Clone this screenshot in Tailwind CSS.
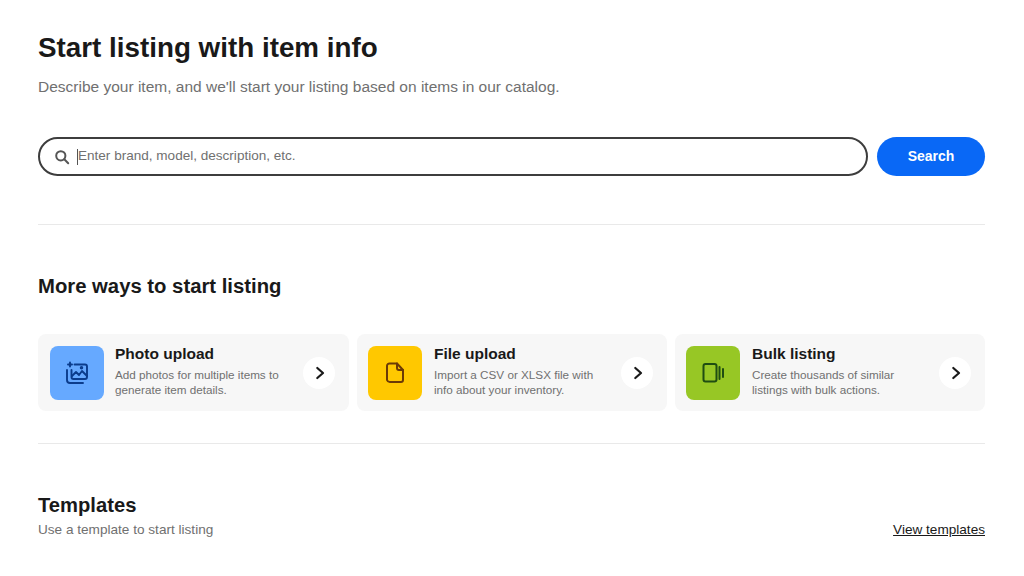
<!DOCTYPE html>
<html lang="en">
<head>
<meta charset="utf-8">
<title>Start listing</title>
<script src="https://cdn.jsdelivr.net/npm/@tailwindcss/browser@4"></script>
</head>
<body class="bg-white font-['Liberation_Sans',Arial,sans-serif] text-[#191919] overflow-hidden">
<main class="w-[1024px] h-[576px] pl-[38px] pr-[39px] pt-[31px] overflow-hidden">
  <h1 class="text-[27.8px] leading-[34px] font-bold">Start listing with item info</h1>
  <p class="mt-[12px] text-[15.5px] leading-[20px] text-[#707070]">Describe your item, and we'll start your listing based on items in our catalog.</p>
  <div class="mt-[40px] flex gap-[9px]">
    <div class="flex-1 h-[39px] rounded-full border-2 border-[#3d3d3d] flex items-center pl-[14px]">
      <svg class="w-[16px] h-[16px] text-[#555]" viewBox="0 0 16 16" fill="none" stroke="currentColor" stroke-width="2" stroke-linecap="round"><circle cx="6.8" cy="6.8" r="4.6"/><path d="M10.3 10.3 14.2 14.2"/></svg>
      <span class="ml-[7px] w-px h-[16px] bg-[#555]"></span>
      <span class="text-[13.55px] text-[#707070]">Enter brand, model, description, etc.</span>
    </div>
    <button class="w-[108px] h-[39px] rounded-full bg-[#0968f6] text-white text-[14px] font-bold">Search</button>
  </div>
  <hr class="mt-[48px] border-[#e9e9e9]">
  <h2 class="mt-[49px] text-[20.3px] leading-[24px] font-bold">More ways to start listing</h2>
  <div class="mt-[36px] grid grid-cols-[311px_310px_310px] gap-[8px]">
    <a class="h-[77px] rounded-[8px] bg-[#f7f7f7] flex items-center pl-[12px] pr-[14px]">
      <span class="w-[54px] h-[54px] shrink-0 rounded-[8px] bg-[#66a9ff] flex items-center justify-center text-[#0b3c8c]">
        <svg class="w-[24px] h-[24px]" viewBox="0 0 24 24" fill="none" stroke="currentColor" stroke-width="1.9" stroke-linecap="round" stroke-linejoin="round"><path d="M5 1.5v4M3 3.5h4"/><path d="M9.5 3.5H20a2 2 0 0 1 2 2V16a2 2 0 0 1-2 2H8.5a2 2 0 0 1-2-2V9"/><path d="M7 15l4-4 3 3 3-4 5 5"/><circle cx="16.5" cy="6.8" r=".8"/><path d="M2 9v10a3 3 0 0 0 3 3h13"/></svg>
      </span>
      <span class="ml-[11px] flex-1 min-w-0 self-start pt-[10px]">
        <span class="block text-[15.5px] leading-[20px] font-bold">Photo upload</span>
        <span class="block mt-[3px] text-[11.7px] leading-[15px] text-[#707070]">Add photos for multiple items to<br>generate item details.</span>
      </span>
      <span class="w-[32px] h-[32px] shrink-0 rounded-full bg-white flex items-center justify-center">
        <svg class="w-[16px] h-[16px]" viewBox="0 0 16 16" fill="none" stroke="#191919" stroke-width="2.2" stroke-linecap="round" stroke-linejoin="round"><path d="M6.3 3l5.7 5-5.7 5"/></svg>
      </span>
    </a>
    <a class="h-[77px] rounded-[8px] bg-[#f7f7f7] flex items-center pl-[11px] pr-[14px]">
      <span class="w-[54px] h-[54px] shrink-0 rounded-[8px] bg-[#ffc800] flex items-center justify-center text-[#6b3a06]">
        <svg class="w-[24px] h-[24px]" viewBox="0 0 24 24" fill="none" stroke="currentColor" stroke-width="2" stroke-linecap="round" stroke-linejoin="round"><path d="M7 2.5h7l6 6.5v10a2 2 0 0 1-2 2H7a3 3 0 0 1-3-2V5a2.5 2.5 0 0 1 3-2.5z"/><path d="M14 2.5V7a2 2 0 0 0 2 2h4"/></svg>
      </span>
      <span class="ml-[12px] flex-1 min-w-0 self-start pt-[10px]">
        <span class="block text-[15.5px] leading-[20px] font-bold">File upload</span>
        <span class="block mt-[3px] text-[11.7px] leading-[15px] text-[#707070]">Import a CSV or XLSX file with<br>info about your inventory.</span>
      </span>
      <span class="w-[32px] h-[32px] shrink-0 rounded-full bg-white flex items-center justify-center">
        <svg class="w-[16px] h-[16px]" viewBox="0 0 16 16" fill="none" stroke="#191919" stroke-width="2.2" stroke-linecap="round" stroke-linejoin="round"><path d="M6.3 3l5.7 5-5.7 5"/></svg>
      </span>
    </a>
    <a class="h-[77px] rounded-[8px] bg-[#f7f7f7] flex items-center pl-[11px] pr-[14px]">
      <span class="w-[54px] h-[54px] shrink-0 rounded-[8px] bg-[#97c725] flex items-center justify-center text-[#1f4d12]">
        <svg class="w-[24px] h-[24px]" viewBox="0 0 24 24" fill="none" stroke="currentColor" stroke-width="2" stroke-linecap="round" stroke-linejoin="round"><rect x="2.5" y="3" width="13" height="17.5" rx="2"/><path d="M18.5 6v12M22 8v8"/></svg>
      </span>
      <span class="ml-[12px] flex-1 min-w-0 self-start pt-[10px]">
        <span class="block text-[15.5px] leading-[20px] font-bold">Bulk listing</span>
        <span class="block mt-[3px] text-[11.7px] leading-[15px] text-[#707070]">Create thousands of similar<br>listings with bulk actions.</span>
      </span>
      <span class="w-[32px] h-[32px] shrink-0 rounded-full bg-white flex items-center justify-center">
        <svg class="w-[16px] h-[16px]" viewBox="0 0 16 16" fill="none" stroke="#191919" stroke-width="2.2" stroke-linecap="round" stroke-linejoin="round"><path d="M6.3 3l5.7 5-5.7 5"/></svg>
      </span>
    </a>
  </div>
  <hr class="mt-[32px] border-[#e9e9e9]">
  <div class="mt-[49px] flex items-end justify-between">
    <div>
      <h2 class="text-[20.2px] leading-[24px] font-bold">Templates</h2>
      <p class="mt-[3px] text-[13.6px] leading-[20px] text-[#707070]">Use a template to start listing</p>
    </div>
    <a class="text-[13.6px] leading-[20px] underline">View templates</a>
  </div>
</main>
</body>
</html>
